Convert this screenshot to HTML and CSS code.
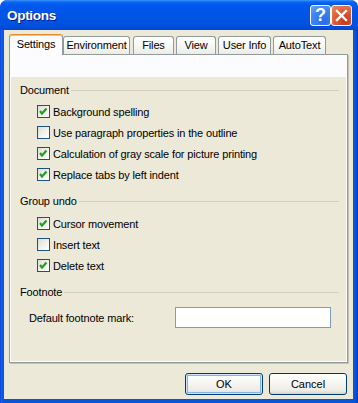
FILE: index.html
```html
<!DOCTYPE html>
<html lang="en">
<head>
    <meta charset="UTF-8">
    <meta name="viewport" content="width=device-width, initial-scale=1.0">
    <title>Options</title>
    <link rel="stylesheet" href="styles.css">
</head>
<body>
    <div class="window">
        <div class="titlebar">
            <span class="title">Options</span>
            <div class="title-buttons">
                <button class="tb-btn help">?</button>
                <button class="tb-btn close">
                    <svg width="13" height="13" viewBox="0 0 13 13">
                        <path d="M2 2 L11 11 M11 2 L2 11" stroke="#fff" stroke-width="2.4" stroke-linecap="square"/>
                    </svg>
                </button>
            </div>
        </div>

        <div class="client">
            <div class="tabs">
                <div class="tab active">Settings</div>
                <div class="tab tab-env">Environment</div>
                <div class="tab tab-files">Files</div>
                <div class="tab tab-view">View</div>
                <div class="tab tab-user">User Info</div>
                <div class="tab tab-auto">AutoText</div>
            </div>

            <div class="panel">
                <div class="page">
                    <div class="group-title">Document</div>
                    <label class="check-row"><span class="checkbox checked"></span>Background spelling</label>
                    <label class="check-row"><span class="checkbox"></span>Use paragraph properties in the outline</label>
                    <label class="check-row"><span class="checkbox checked"></span>Calculation of gray scale for picture printing</label>
                    <label class="check-row"><span class="checkbox checked"></span>Replace tabs by left indent</label>

                    <div class="group-title spaced">Group undo</div>
                    <label class="check-row"><span class="checkbox checked"></span>Cursor movement</label>
                    <label class="check-row"><span class="checkbox"></span>Insert text</label>
                    <label class="check-row"><span class="checkbox checked"></span>Delete text</label>

                    <div class="group-title spaced wide">Footnote</div>
                    <div class="field-row">
                        <label for="mark">Default footnote mark:</label>
                        <input type="text" id="mark">
                    </div>
                </div>
            </div>

            <div class="button-row">
                <button class="btn default">OK</button>
                <button class="btn">Cancel</button>
            </div>
        </div>
    </div>

    <script>
        // checkbox marks
        document.querySelectorAll('.checkbox.checked').forEach(function(box) {
            box.innerHTML = '<svg width="11" height="11" viewBox="0 0 11 11"><path d="M2 5 L4 7.5 L8.5 2.5" fill="none" stroke="#21A121" stroke-width="2.2"/></svg>';
        });
    </script>
</body>
</html>
```

FILE: styles.css
```css
body {
    margin: 0;
    background-color: #ffffff;
    font-family: "Liberation Sans", Arial, sans-serif;
    font-size: 11px;
    letter-spacing: -0.15px;
    color: #000;
}
.window {
    width: 358px;
    height: 403px;
    box-sizing: border-box;
    border-radius: 7px 7px 0 0;
    background: linear-gradient(to right, #0831D9 0, #1665EE 1px, #0855DD 3px, #0855DD 355px, #0637C8 358px);
    overflow: hidden;
}
.titlebar {
    height: 30px;
    display: flex;
    align-items: center;
    justify-content: space-between;
    padding: 0 6px 0 7px;
    border-radius: 7px 7px 0 0;
    background: linear-gradient(to bottom, #3D95FF 0, #0A66EE 2px, #0058EE 5px, #0055E5 14px, #0053E0 24px, #0048D2 30px);
}
.title {
    color: #fff;
    font-weight: bold;
    font-size: 13.5px;
    letter-spacing: -0.3px;
    text-shadow: 1px 1px 0 #0A1E9A;
    margin-top: 1px;
}
.title-buttons {
    display: flex;
    margin-top: 1px;
}
.tb-btn {
    width: 21px;
    height: 21px;
    box-sizing: border-box;
    border: 1px solid #fff;
    border-radius: 3px;
    padding: 0;
    display: flex;
    align-items: center;
    justify-content: center;
    color: #fff;
    font-family: "Liberation Sans", Arial, sans-serif;
    font-weight: bold;
    font-size: 18px;
}
.help {
    background: radial-gradient(circle at 70% 80%, #2B6CE8 0, #3F85F5 60%, #6FA5FF 100%);
}
.close {
    background: radial-gradient(circle at 70% 80%, #C2391A 0, #E1633E 60%, #EB8E70 100%);
}
.client {
    background-color: #ECE9D8;
    margin: 0 5px 4px 4px;
    height: 369px;
    box-sizing: border-box;
    padding: 4px 5px 0 5px;
}
.tabs {
    display: flex;
    align-items: flex-end;
    height: 21px;
    position: relative;
    z-index: 1;
    margin-bottom: -1px;
}
.tab {
    box-sizing: border-box;
    height: 18px;
    border: 1px solid #919B9C;
    border-bottom: none;
    border-radius: 3px 3px 0 0;
    background: linear-gradient(to bottom, #FFFFFF 0, #FAFAF9 40%, #ECEBE6 100%);
    text-align: center;
    line-height: 17px;
    margin-right: 2px;
    margin-bottom: 1px;
}
.tab.active {
    height: 21px;
    width: 54px;
    margin-right: 0;
    margin-bottom: 0;
    background: #FCFCFE;
    border-top: 1px solid #E68B2C;
    box-shadow: inset 0 1px 0 #FFC83C;
    padding-top: 2px;
    line-height: 15px;
}
.tab-env { width: 67px; }
.tab-files { width: 41px; margin-left: 1px; }
.tab-view { width: 40px; }
.tab-user { width: 53px; }
.tab-auto { width: 53px; }
.panel {
    height: 309px;
    width: 339px;
    box-sizing: border-box;
    border: 1px solid #919B9C;
    background-color: #FCFCFE;
    padding: 22px 1px 1px 1px;
    box-shadow: 1px 1px 0 #C4C2B4;
}
.page {
    background-color: #ECE9D8;
    height: 100%;
    box-sizing: border-box;
    padding: 7px 7px 0 9px;
}
.group-title {
    display: flex;
    align-items: center;
    height: 13px;
    line-height: 13px;
    margin-bottom: 4px;
}
.group-title::after {
    content: "";
    flex: 1;
    height: 1px;
    margin-left: 2px;
    background-color: #D0D0BF;
}
.group-title.spaced {
    margin-top: 10px;
    margin-bottom: 5px;
}
.group-title.wide {
    margin-bottom: 8px;
}
.check-row {
    display: flex;
    align-items: center;
    height: 21px;
    padding-left: 17px;
}
.checkbox {
    width: 13px;
    height: 13px;
    box-sizing: border-box;
    border: 1px solid #1C5180;
    background: linear-gradient(135deg, #DCDCD7 0, #F4F4F0 60%, #FFFFFF 100%);
    margin-right: 3px;
    display: flex;
    align-items: center;
    justify-content: center;
}
.field-row {
    display: flex;
    align-items: center;
    justify-content: space-between;
    padding-left: 9px;
    padding-right: 8px;
}
.field-row input {
    width: 156px;
    height: 21px;
    box-sizing: border-box;
    border: 1px solid #7F9DB9;
    background: #fff;
    padding: 0 3px;
}
.button-row {
    display: flex;
    justify-content: flex-end;
    gap: 6px;
    margin-top: 10px;
    padding-right: 1px;
}
.btn {
    width: 78px;
    height: 22px;
    box-sizing: border-box;
    border: 1px solid #003C74;
    border-radius: 3px;
    background: linear-gradient(to bottom, #FFFFFF 0, #F5F4EF 50%, #ECEBE4 85%, #D6D0C5 100%);
    font-family: "Liberation Sans", Arial, sans-serif;
    font-size: 11px;
    color: #000;
    padding: 0;
}
.btn.default {
    box-shadow: inset 0 0 0 1px #CEE7FF, inset 0 0 0 2px #8AAEE6;
}
```
